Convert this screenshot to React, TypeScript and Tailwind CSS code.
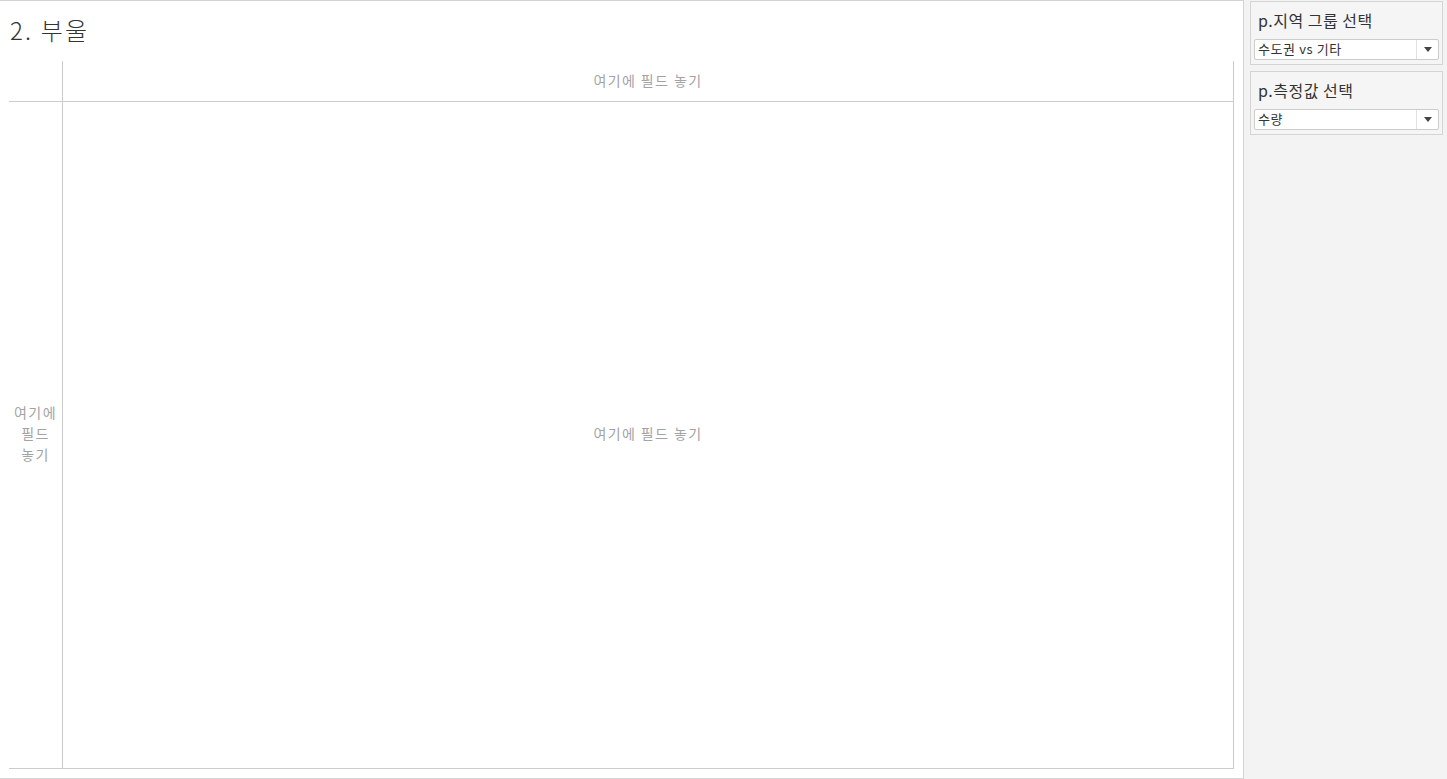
const font = { fontFamily: '"Noto Sans CJK KR", "Noto Sans", sans-serif' };

function Param({ title, value }: { title: string; value: string }) {
  return (
    <div className="border border-[#d4d4d4] bg-[#f5f5f5] h-[64px] px-[3px] pt-[5px]">
      <div className="pl-[4px] text-[16px] leading-[26px] tracking-[0.5px] text-[#333]">{title}</div>
      <div className="mt-[6px] flex h-[21px] items-stretch rounded-[2px] border border-[#cccccc] bg-white">
        <div className="flex-1 pl-[3px] text-[13px] leading-[18px] tracking-[0.6px] text-[#333]">{value}</div>
        <div className="flex w-[22px] items-center justify-center border-l border-[#e0e0e0]">
          <svg width="8" height="5" viewBox="0 0 8 5">
            <path d="M0 0h8L4 5z" fill="#444" />
          </svg>
        </div>
      </div>
    </div>
  );
}

export default function App() {
  const hint = "text-[14px] tracking-[1.4px] text-[#a3a3a3]";
  return (
    <div className="flex h-[779px] w-[1447px] bg-white" style={font}>
      {/* sheet */}
      <div className="flex h-[779px] w-[1244px] flex-col border-t border-r border-b border-[#d4d4d4]">
        <div className="h-[60px] pl-[10px] pt-[13px] text-[24px] font-light leading-[32px] tracking-[2.2px] text-[#333]">
          2. 부울
        </div>
        <div className="ml-[9px] flex h-[708px] w-[1225px] flex-col border-r border-b border-[#cccccc]">
          <div className="flex h-[41px] border-b border-[#cccccc]">
            <div className="w-[53px]" />
            <div className={`flex flex-1 items-center justify-center border-l border-[#cccccc] pb-[2px] ${hint}`}>
              여기에 필드 놓기
            </div>
          </div>
          <div className="flex flex-1">
            <div className={`flex w-[53px] items-center justify-center pb-[3px] text-center leading-[21px] ${hint}`}>
              여기에
              <br />
              필드
              <br />
              놓기
            </div>
            <div className={`flex flex-1 items-center justify-center border-l border-[#cccccc] pb-[3px] ${hint}`}>
              여기에 필드 놓기
            </div>
          </div>
        </div>
      </div>
      {/* parameters */}
      <div className="flex flex-1 flex-col gap-[6px] bg-[#f3f3f3] pt-[1px] pl-[6px] pr-[4px]">
        <Param title="p.지역 그룹 선택" value="수도권 vs 기타" />
        <Param title="p.측정값 선택" value="수량" />
      </div>
    </div>
  );
}
